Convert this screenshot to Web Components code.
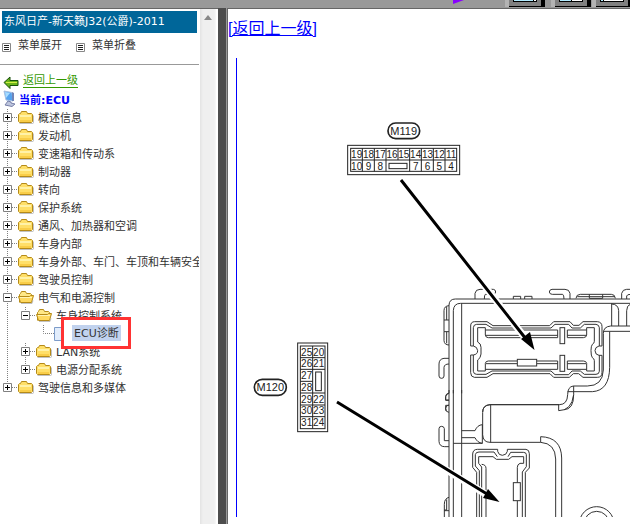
<!DOCTYPE html>
<html lang="zh-CN">
<head>
<meta charset="utf-8">
<meta name="viewport" content="width=device-width, initial-scale=1">
<title>ECU诊断</title>
<style>
html,body{margin:0;height:100%}
body{font:11px/18px "DejaVu Sans","Noto Sans CJK SC",sans-serif;color:#333;overflow:hidden}
</style>
</head>
<body>
<manual-app></manual-app>
<script>
function define(name, css, html) {
  customElements.define(name, class extends HTMLElement {
    constructor() {
      super();
      this.attachShadow({ mode: 'open' });
    }
    connectedCallback() {
      this.shadowRoot.innerHTML = '<style>' + css + '</style>' + (typeof html === 'function' ? html(this) : html);
    }
  });
}

/* Toolbar strip with the lower edges of its buttons */
define('top-toolbar', `
:host{display:block;height:7px;background:#999;overflow:hidden}
div{display:flex;justify-content:flex-end;align-items:flex-start;height:7px}
button{flex:none;border:0;padding:0;margin:0;background:none;height:7px;line-height:0}
.play{margin-right:41px}.one{margin-right:6px}.two{margin-right:1px}
svg{display:block}`, `
<div>
<button class="play" aria-label="播放"><svg width="11" height="7"><path d="M0 0H11L0 4Z" fill="#80f"/></svg></button>
<button class="one" aria-label="窗口一"><svg width="40" height="7"><path fill="#b3b3b3" d="M0 0h4v7H0z"/><path fill="#808080" d="M4 0h32v6H4z"/><path d="M36 0h4v7H4V6h32zM8 0h24v2H8z"/><path fill="#b3ecff" d="M9 0h19v1H9z"/><path fill="#fff" d="M29 0h2v1h-2z"/></svg></button>
<button class="two" aria-label="窗口二"><svg width="40" height="7"><path fill="#b3b3b3" d="M0 0h4v7H0z"/><path fill="#808080" d="M4 0h32v6H4z"/><path d="M36 0h4v7H4V6h32zM8 0h24v2H8z"/><path fill="#b3ecff" d="M9 0h11v1H9z"/><path fill="#fff" d="M21 0h10v1H21z"/></svg></button>
<button aria-label="窗口三"><svg width="38" height="7"><path fill="#b3b3b3" d="M0 0h4v7H0z"/><path fill="#808080" d="M4 0h34v6H4z"/><path d="M4 6h34v1H4zM8 0h24v2H8zM36 0h2v7h-2z"/><path fill="#b3ecff" d="M9 0h2v1H9z"/><path fill="#fff" d="M12 0h19v1H12z"/></svg></button>
</div>`);

const dot = 'stroke="#808080" stroke-dasharray="1 1" fill="none"';
const guide = {
  l: `<svg width="18" height="18"><path ${dot} d="M7.5 0V18"/></svg>`,
  n: `<svg width="18" height="18"></svg>`,
  e: `<svg width="18" height="18"><path ${dot} d="M7.5 0V8.5H18"/></svg>`
};
const box = (open, last) => `<svg width="18" height="18"><path ${dot} d="M7.5 0V${last ? 9 : 18}M12 8.5H18"/><path d="M3.5 4.5h8v8h-8z" fill="#fff" stroke="#808080"/><path d="M5 8.5h5${open ? '' : 'M7.5 6v5'}" stroke="#000"/></svg>`;
const folder = `<svg width="16" height="18"><path d="M1.5 14.5h13q1 0 1-1v-7" stroke="#999" opacity=".6" fill="none"/><path d="M.5 5.5l1-1h1l1-2h5l1 2h4l1 1v7l-1 1H1.500l-1-1z" fill="#ffdf68" stroke="#b58a18"/><path d="M2 6h11v2H2z" fill="#fff2a8"/><path d="M2 11h11v2H2z" fill="#f9cd48"/></svg>`;
const folderOpen = `<svg width="16" height="18"><path d="M1.500 13.500V5.500l1-1 1-2h4l1 2h4l1 1v2" fill="#ffe887" stroke="#b58a18"/><path d="M.5 7.500h11l1-1h3l-2 7H2.500z" fill="#ffd960" stroke="#b58a18"/><path d="M2 8.500h12" stroke="#fff4b5"/><path d="M3 14.500h11l1-3" stroke="#999" opacity=".6" fill="none"/></svg>`;
const page = `<svg width="16" height="18"><path d="M.5 2.500h9l4 4v9H.5z" fill="#e2edfc" stroke="#7d9cc9"/></svg>`;

/* One tree row: guides="..." lists ancestor columns, kind = closed | open | page */
define('tree-row', `
:host{display:flex;height:18px;white-space:nowrap}
svg{display:block}.g{flex:none}
button{border:0;padding:0;background:none;flex:none}
a{color:#333;text-decoration:none;margin-left:4px;line-height:20px;height:18px}
:host([kind=page]) a{position:relative;z-index:2;background:#c1d2ee;padding:0 2px;height:16px;line-height:18px;margin:0 0 0 2px}
.hold{position:relative;z-index:1;display:flex;align-items:flex-start}
.frame{position:absolute;left:-9px;right:-10px;top:-8px;bottom:-6px;border:3px solid #f33;background:#fff}`, el => {
  const k = el.getAttribute('kind') || 'closed';
  const g = (el.getAttribute('guides') || '').split('').map(c => `<span class="g">${guide[c]}</span>`).join('');
  const t = k === 'page' ? '' : `<button aria-label="${k === 'open' ? '折叠' : '展开'}">${box(k === 'open', el.hasAttribute('last'))}</button>`;
  const i = k === 'page' ? page : k === 'open' ? folderOpen : folder;
  const link = '<a href="#"><slot></slot></a>';
  return g + t + `<span class="g">${i}</span>` + (k === 'page' ? `<span class="hold"><span class="frame"></span>${link}</span>` : link);
});

const listIcon = `<svg width="9" height="9"><path d="M.5.5h8v8h-8z" fill="#fff" stroke="#888"/><path d="M2 2.500h5M2 4.500h5M2 6.500h5" stroke="#222"/></svg>`;
define('side-menu', `
:host{display:block;flex:none;width:199px;overflow:hidden;background:#fff;box-sizing:border-box;padding-top:2px}
h1{margin:0 2px;height:22px;font:inherit;line-height:22px;padding-left:2px;background:#069;color:#fff;white-space:nowrap;box-sizing:border-box}
.tools{display:flex;gap:14px;padding:4px 2px 0;height:31px;box-sizing:border-box}
.tools button{display:flex;align-items:center;gap:7px;height:18px;border:0;padding:0;background:none;font:inherit;color:inherit}
.tools svg{margin-top:2px}
hr{margin:0;border:0;border-top:1px solid #999}
.back{display:flex;align-items:flex-start;gap:4px;padding:7px 0 0 3px;height:25px;box-sizing:border-box}
.back svg{margin-top:4px}
.back a{color:#390;text-decoration:none;border-bottom:1px solid #390;line-height:17px;height:15px}
.now{display:flex;gap:2px;height:19px;padding-left:2px;color:#00f;font-weight:bold;line-height:22px}
svg{display:block}`, `
<h1>东风日产-新天籁J32(公爵)-2011</h1>
<div class="tools"><button>${listIcon}菜单展开</button><button>${listIcon}菜单折叠</button></div>
<hr>
<div class="back"><svg width="16" height="13"><path d="M1 6.500L7 1V4.500H15V9.500H7V12.500Z" fill="#6bb51c" stroke="#174f0c"/><path d="M3 6.500h11" stroke="#d3ee44"/></svg><a href="#">返回上一级</a></div>
<div class="now"><svg width="15" height="18"><path d="M2 1L10 2.500 11 11 4 10Z" fill="#55a3ef" stroke="#a8bfe0"/><path d="M3 2l5 1-4 5z" fill="#a8dcff"/><path d="M10 2l2 1v8l-2 0z" fill="#7085b8"/><path d="M6 11l3 1v1l4 1-3 2.500-7-1.500z" fill="#bdc5dd" stroke="#777fa8"/></svg><span>当前:ECU</span></div>
<nav>
<tree-row>概述信息</tree-row>
<tree-row>发动机</tree-row>
<tree-row>变速箱和传动系</tree-row>
<tree-row>制动器</tree-row>
<tree-row>转向</tree-row>
<tree-row>保护系统</tree-row>
<tree-row>通风、加热器和空调</tree-row>
<tree-row>车身内部</tree-row>
<tree-row>车身外部、车门、车顶和车辆安全</tree-row>
<tree-row>驾驶员控制</tree-row>
<tree-row kind="open">电气和电源控制</tree-row>
<tree-row kind="open" guides="l" last>车身控制系统</tree-row>
<tree-row kind="page" guides="lne">ECU诊断</tree-row>
<tree-row guides="l">LAN系统</tree-row>
<tree-row guides="l" last>电源分配系统</tree-row>
<tree-row last>驾驶信息和多媒体</tree-row>
</nav>`);

define('scroll-track', `
:host{display:block;flex:none;width:16px;background:linear-gradient(90deg,#e3e3e3,#efefef 3px,#efefef 14px,#f8f8f8);margin:0 2px 0 1px}
svg{display:block;margin:6px 0 0 4px}`, `<svg width="8" height="5"><path d="M0 5L4 0L8 5Z" fill="#888"/></svg>`);

/* Connector layout drawing; groups are drawn at three times the final scale */
const pins = (list, y, x0, dx) => list.map((n, i) => n ? `<text x="${x0 + i * dx}" y="${y}">${n}</text>` : '').join('');
const column = (list, x) => list.map((n, i) => n ? `<text x="${x}" y="${62 + Math.round(i * 35.2)}">${n}</text>` : '').join('');
define('wiring-diagram', `
:host{display:block;border-left:1px solid #00f}
svg{display:block}
text{font-family:"Liberation Sans",sans-serif;font-size:30px;text-anchor:middle;fill:#222;stroke:none}
.name{font-size:33px}`, `
<svg width="393" height="459" viewBox="237 58 393 459" role="img" aria-label="M119 M120">
<g fill="none" stroke="#222" stroke-width="3">
<g transform="translate(330 110) scale(.3333333)">
<rect x="174" y="39" width="95" height="47" rx="23" stroke-width="5"/><text class="name" x="221" y="75">M119</text>
<rect x="53" y="106" width="336" height="88"/><rect x="62" y="115" width="318" height="69"/>
<path d="M62 150H380M97 115V184M133 115V184M168 115V184M204 115V150M239 115V184M274 115V184M310 115V184M345 115V184"/>
<rect x="177" y="160" width="54" height="16"/>
${pins([19,18,17,16,15,14,13,12,11],144,80,35.4)}${pins([10,9,8,0,0,7,6,5,4],179,80,35.4)}
</g>
<g transform="translate(245 335) scale(.3333333)">
<rect x="28" y="133" width="96" height="48" rx="24" stroke-width="5"/><text class="name" x="76" y="169">M120</text>
<rect x="158" y="24" width="90" height="266"/><rect x="166" y="33" width="74" height="248"/>
<path d="M203 33V281M166 68H240M166 103H240M166 139H203M166 174H240M166 210H240M166 245H240"/>
<rect x="212" y="111" width="17" height="56"/>
${column([25,26,27,28,29,30,31],185)}${column([20,21,0,0,22,23,24],221)}
</g>
<g stroke="#333" stroke-width="3">
<g transform="translate(430 280) scale(.3333333)">
<path d="M57 340V75Q58 57 76 57H602M70 340V92Q71 70 92 70H602M95 70V340"/>
<path d="M135 57V40Q137 28 150 28H190Q197 29 197 36Q196 43 188 43H166Q163 45 163 57M420 57V40Q418 28 405 28H366Q358 29 358 36Q359 43 367 43H398Q402 45 402 57M575 57V40Q578 28 590 28H602M590 57V48Q591 43 602 43"/>
<path d="M250 57V49H272V57M284 57V49H306V57M438 55Q439 43 451 43H544Q555 43 556 55M442 50H554M478 43V55H518V43"/>
<path d="M57 77Q42 78 42 92V120H57M50 80V120M42 120V155H57M42 155V182Q43 195 57 195M50 155V190M57 235H42Q27 237 27 252V288Q27 295 35 295Q42 295 42 288V262Q43 252 57 252M57 340Q47 342 47 350V360H57M57 376H47V392"/>
<path d="M545 70V138M545 72Q565 73 566 92V138M602 72Q590 76 590 92V138M602 138H542Q520 140 520 160V270Q518 318 472 318H430Q413 320 413 344Q412 374 388 374H181Q158 376 158 396M520 154H602M539 155V262Q538 332 487 335H413M431 318V344Q431 389 402 389"/>
<path d="M122 198V138Q122 125 134 125H171L189 137H359L371 125H420L430 136H447L459 125H502Q516 126 516 140V198H507Q495 201 495 212Q496 225 507 226H516V278Q516 292 502 292H459L446 281H430L418 292H371L360 281H189L171 292H133Q122 291 122 278V225H130Q143 223 143 212Q142 200 130 198Z"/>
<path d="M130 198V143Q131 133 140 133H168L186 144H363L375 133H416L426 144H451L463 133H498Q507 134 508 143V198M130 225V274Q131 283 140 283H168L186 273H363L375 284H416L426 273H451L463 283H498Q507 283 508 274V226"/>
<path d="M143 186V143H166V165Q167 173 175 173H383M166 150H383V173M168 166H383M143 186Q153 190 153 202V222Q152 235 143 240V273H166V250Q167 243 175 243H262M320 243H383V268H166M168 251H262M320 251H383"/>
<rect x="262" y="238" width="58" height="20" fill="#fff"/><rect x="390" y="143" width="14" height="48" fill="#fff"/><rect x="390" y="226" width="14" height="48" fill="#fff"/>
<path d="M412 150H470M412 150V173H460Q470 172 470 165V143H493V184Q493 190 487 193Q483 198 483 212Q483 228 487 233Q493 236 493 242V273H470V250Q469 243 460 243H412V268H470M412 166H468M412 251H468"/>
</g>
<g transform="translate(430 390) scale(.3333333)">
<path d="M57 0V382M70 0V382M95 0V382M57 9Q47 11 47 20V31H57M57 45Q47 46 47 55Q47 67 57 67M57 152H43V116Q42 109 35 109Q27 109 27 116V154Q28 170 44 170H57M70 160H157M95 122H135Q142 105 157 104V160Q142 158 135 143H95"/>
<path d="M388 44H180Q158 45 158 67V134Q159 157 180 157H332M182 44V157M386 44V62Q425 62 431 14M332 157V140Q394 142 395 204V382M332 157Q376 160 377 207V382"/>
<path d="M140 382V247L128 232V192Q129 178 142 178H203V184Q206 196 217 196Q230 195 232 184V178H288Q298 179 298 191V234L286 247V382M148 382V242L136 228V194Q137 186 147 186H192L202 200"/>
<path d="M155 382V231L146 220V200H189L199 208H236L246 200H281V220H270Q262 223 262 232V278M155 223Q168 224 168 235V382M262 333V382M277 382V246L289 230V194Q289 187 280 187H242L234 200"/>
<rect x="250" y="278" width="21" height="54"/><path d="M57 322Q43 325 43 343V382M50 328V360H42M57 362H42"/>
<circle cx="500" cy="402" r="52"/><circle cx="500" cy="402" r="38"/>
</g></g></g>
<g stroke="#fff" stroke-width="7"><path d="M402 181L530 344M338 403L492 498"/></g>
<g stroke="#000" stroke-width="3"><path d="M401 180L526 339M337 402L487 494"/></g>
<path d="M534.500 350L521 339L530 332ZM499.500 502L483 498L488 489Z"/>
</svg>`);

define('manual-page', `
:host{display:block;flex:1;min-width:0;overflow:hidden;background:#fff;padding:7px 0 0;box-sizing:border-box}
.up{display:inline-block;color:#00f;font:16px/26px "Liberation Sans","Noto Sans CJK SC",sans-serif;height:42px}
wiring-diagram{margin-left:8px}`, `<a class="up" href="#">[返回上一级]</a><wiring-diagram></wiring-diagram>`);

define('manual-app', `
:host{display:flex;flex-direction:column;height:100vh}
main{display:flex;flex:1;min-height:0}
.left,.right{display:flex;border-top:1px solid #666;min-width:0}
.left{flex:none}
.right{flex:1;border-left:1px solid #666}
.edge{flex:none;height:1px;background:#999}
.split{flex:none;width:8px;background:#4d4d4d;border-right:1px solid #999}`, `
<top-toolbar></top-toolbar><div class="edge"></div>
<main><div class="left"><side-menu></side-menu><scroll-track></scroll-track></div><div class="split"></div><div class="right"><manual-page></manual-page></div></main>`);
</script>
</body>
</html>
